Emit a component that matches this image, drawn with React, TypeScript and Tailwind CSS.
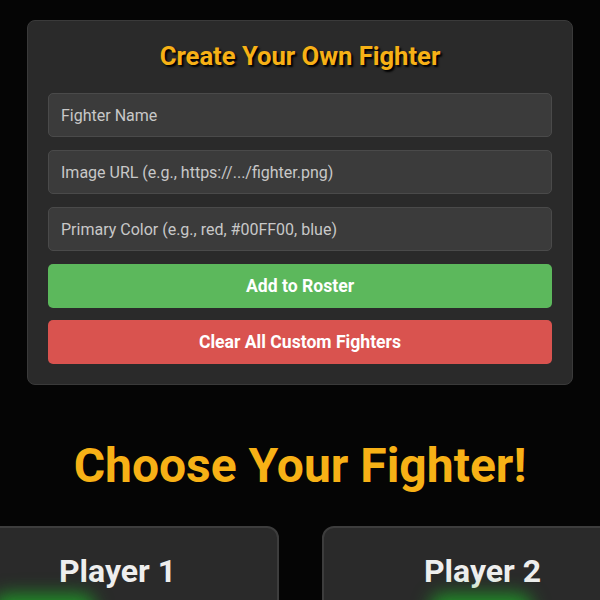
import React from "react";

const font = { fontFamily: "Roboto, 'Liberation Sans', sans-serif" };

function FighterForm() {
  const fields = [
    "Fighter Name",
    "Image URL (e.g., https://.../fighter.png)",
    "Primary Color (e.g., red, #00FF00, blue)",
  ];
  return (
    <div className="w-[546px] mx-auto mt-5 bg-[#2a2a2a] border border-[#3a3a3a] rounded-lg px-5 pt-5 pb-5 flex flex-col">
      <h2 className="text-center text-[25.6px] leading-[30px] font-bold text-[#f7b116] [text-shadow:2px_2px_2px_#000] mb-[22px]">
        Create Your Own Fighter
      </h2>
      <div className="flex flex-col gap-[13px]">
        {fields.map((f) => (
          <input
            key={f}
            placeholder={f}
            className="h-[44px] w-full bg-[#3b3b3b] border border-[#4a4a4a] rounded-[5px] px-3 text-[16px] text-white placeholder:text-[#c8c8c8] outline-none"
          />
        ))}
        <button className="h-[44px] w-full bg-[#5cb85c] rounded-[5px] text-white text-[17.6px] font-bold">
          Add to Roster
        </button>
        <button className="h-[44px] w-full bg-[#d9534f] rounded-[5px] text-white text-[17.6px] font-bold -mt-px">
          Clear All Custom Fighters
        </button>
      </div>
    </div>
  );
}

function PlayerCard({ name, glowOffset }: { name: string; glowOffset: string }) {
  return (
    <div className="w-[322px] shrink-0 h-[200px] bg-[#2a2a2a] border-2 border-[#3d3d3d] rounded-xl pt-[24px] flex flex-col">
      <h3 className="text-center text-[32px] leading-[38px] font-bold text-[#eeeeee]">{name}</h3>
      <div className="mt-[10px] relative h-[100px]">
        <div
          className={`absolute top-0 w-[90px] h-[100px] rounded-lg bg-[#1f3a1f] border-2 border-[#2ecc40] shadow-[0_0_18px_6px_rgba(30,190,40,0.7)] ${glowOffset}`}
        />
      </div>
    </div>
  );
}

export default function App() {
  return (
    <div className="min-h-[600px] w-full bg-[#050505] overflow-hidden" style={font}>
      <FighterForm />
      <h1 className="text-center text-[48px] leading-[56px] font-bold text-[#f7b116] mt-[53px]">
        Choose Your Fighter!
      </h1>
      <div className="flex justify-center gap-[43px] mt-[32px]">
        <PlayerCard name="Player 1" glowOffset="left-[40px]" />
        <PlayerCard name="Player 2" glowOffset="left-[112px]" />
      </div>
    </div>
  );
}
